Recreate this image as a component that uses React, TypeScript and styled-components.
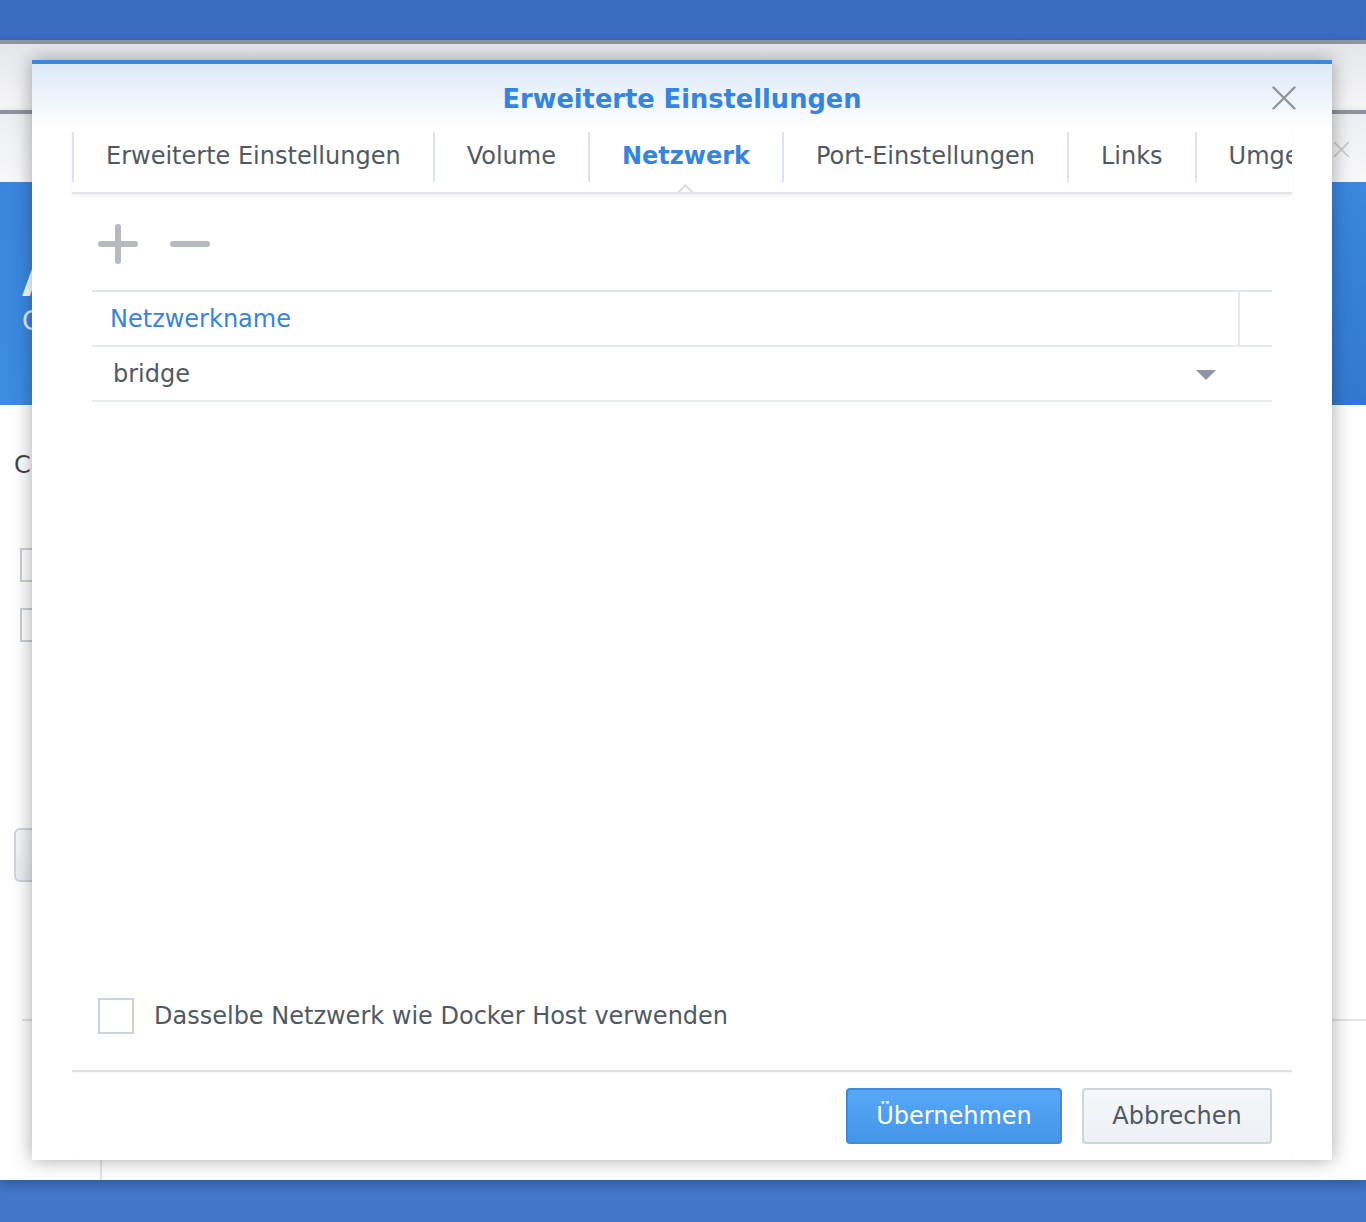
import React from 'react';
import styled, { createGlobalStyle } from 'styled-components';

const GlobalStyle = createGlobalStyle`
  html, body {
    margin: 0;
    padding: 0;
  }
  body {
    font-family: 'DejaVu Sans', Verdana, sans-serif;
    color: #4f5964;
  }
`;

const Desktop = styled.div`
  position: relative;
  width: 1366px;
  height: 1222px;
  overflow: hidden;
  background: #3d70c4;
  background-image: linear-gradient(180deg, #3b6cc0 0%, #4176c9 100%);
`;

const BackWindow = styled.div`
  position: absolute;
  top: 40px;
  left: 0;
  right: 0;
  height: 1140px;
  box-sizing: border-box;
  border-top: 4px solid #8d949d;
  background: #f4f5f6;
  display: flex;
  flex-direction: column;
  box-shadow: 0 4px 10px rgba(0, 0, 0, 0.25);
`;

const BackHeader = styled.div`
  height: 66px;
  flex-shrink: 0;
  background: linear-gradient(180deg, #e4e6e9 0%, #f6f6f7 100%);
`;

const InnerWindow = styled.div`
  height: 1000px;
  flex-shrink: 0;
  box-sizing: border-box;
  border-top: 4px solid #8d949d;
  background: #ffffff;
  display: flex;
  flex-direction: column;
  box-shadow: 0 3px 8px rgba(0, 0, 0, 0.18);
`;

const InnerHeader = styled.div`
  height: 68px;
  background: linear-gradient(180deg, #eceef1 0%, #f8f8f9 100%);
  display: flex;
  justify-content: flex-end;
  align-items: center;
  padding-right: 12px;
`;

const InnerClose = styled.span`
  font-size: 30px;
  color: #c4c8cd;
  font-weight: 200;
`;

const Banner = styled.div`
  height: 223px;
  background: linear-gradient(160deg, #3a86de 0%, #3d8fe6 55%, #3278d2 100%);
  padding: 78px 0 0 22px;
  box-sizing: border-box;
  color: #ffffff;
`;

const BannerTitle = styled.div`
  font-size: 40px;
  font-weight: bold;
  line-height: 44px;
`;

const BannerSub = styled.div`
  font-size: 26px;
  line-height: 34px;
  opacity: 0.85;
`;

const InnerBody = styled.div`
  flex: 1;
  padding: 46px 0 0 14px;
  display: flex;
  flex-direction: column;
`;

const InnerHeading = styled.div`
  font-size: 24px;
  color: #3d4650;
  height: 97px;
`;

const InnerInput = styled.div`
  margin-left: 6px;
  width: 400px;
  height: 30px;
  border: 2px solid #c8d0da;
  margin-bottom: 26px;
`;

const InnerButton = styled.div`
  margin-top: 160px;
  width: 200px;
  height: 50px;
  border: 2px solid #cdd4dc;
  border-radius: 6px;
  background: linear-gradient(180deg, #f6f7f9, #e9ecf0);
`;

const InnerRule = styled.div`
  margin: 137px 0 0 8px;
  height: 2px;
  background: #e2e4e6;
`;

const BackBottom = styled.div`
  flex: 1;
  background: #ffffff;
  padding-left: 100px;
`;

const BackDivider = styled.div`
  height: 100%;
  border-left: 2px solid #e3e4e6;
`;

const Dialog = styled.div`
  position: absolute;
  top: 60px;
  left: 32px;
  width: 1300px;
  height: 1100px;
  box-sizing: border-box;
  border-top: 4px solid #3a87e0;
  background: #ffffff;
  box-shadow: 0 0 18px rgba(0, 0, 0, 0.35);
  display: flex;
  flex-direction: column;
`;

const DialogHeader = styled.div`
  height: 66px;
  flex-shrink: 0;
  background: linear-gradient(180deg, #dce9f8 0%, #ffffff 100%);
  display: grid;
  grid-template-columns: 60px 1fr 60px;
  align-items: center;
`;

const DialogTitle = styled.h1`
  grid-column: 2;
  margin: 0;
  text-align: center;
  font-size: 25.7px;
  font-weight: bold;
  color: #3484e0;
  padding-top: 4px;
`;

const CloseButton = styled.button`
  justify-self: start;
  width: 24px;
  height: 24px;
  margin-top: 2px;
  padding: 0;
  border: none;
  background: none;
  cursor: pointer;
  display: flex;
  align-items: center;
  justify-content: center;
`;

const TabBar = styled.div`
  margin: 0 40px;
  height: 62px;
  flex-shrink: 0;
  display: flex;
  overflow: hidden;
  border-bottom: 2px solid #e3e5e8;
  box-shadow: 0 2px 3px rgba(0, 0, 0, 0.06);
  position: relative;
`;

const Tab = styled.div<{ $active?: boolean }>`
  position: relative;
  flex-shrink: 0;
  height: 48px;
  margin-top: 2px;
  padding: 0 32px 2px;
  border-left: 2px solid #dbe3ec;
  display: flex;
  align-items: center;
  white-space: nowrap;
  font-size: 24px;
  font-weight: ${({ $active }) => ($active ? 'bold' : 'normal')};
  color: ${({ $active }) => ($active ? '#3484e0' : '#4f5964')};
`;

const TabNotch = styled.span`
  position: absolute;
  left: 50%;
  bottom: -20px;
  width: 13px;
  height: 13px;
  margin-left: -8px;
  background: #ffffff;
  border-top: 2px solid #d8dbe0;
  border-left: 2px solid #d8dbe0;
  transform: rotate(45deg);
`;

const Content = styled.div`
  flex: 1;
  padding: 0 60px;
  display: flex;
  flex-direction: column;
`;

const Toolbar = styled.div`
  display: flex;
  gap: 32px;
  padding: 30px 0 0 6px;
  height: 40px;
`;

const ToolButton = styled.button`
  width: 40px;
  height: 40px;
  padding: 0;
  border: none;
  background: none;
  cursor: pointer;
`;

const Grid = styled.div`
  margin-top: 26px;
  border-top: 2px solid #dfe6ee;
`;

const GridRow = styled.div<{ $header?: boolean }>`
  display: flex;
  height: 53px;
  border-bottom: 2px solid #e6ebf0;
  align-items: stretch;
  font-size: 24px;
  color: ${({ $header }) => ($header ? '#3484e0' : '#4f5964')};
`;

const GridCell = styled.div<{ $indent: number }>`
  flex: 1;
  display: flex;
  align-items: center;
  padding-left: ${({ $indent }) => $indent}px;
  padding-right: 56px;
  justify-content: space-between;
`;

const ScrollCell = styled.div`
  width: 32px;
  border-left: 2px solid #e3e8ee;
`;

const Caret = styled.span`
  width: 0;
  height: 0;
  border-left: 10px solid transparent;
  border-right: 10px solid transparent;
  border-top: 10px solid #8e959e;
  margin-top: 2px;
`;

const CheckRow = styled.label`
  margin-top: auto;
  margin-bottom: 36px;
  display: flex;
  align-items: center;
  gap: 20px;
  padding-left: 6px;
  font-size: 24px;
  color: #4f5964;
`;

const CheckBox = styled.span`
  width: 32px;
  height: 32px;
  border: 2px solid #c9d3df;
  background: #ffffff;
`;

const Footer = styled.div`
  margin: 0 40px;
  height: 90px;
  box-sizing: border-box;
  flex-shrink: 0;
  border-top: 2px solid #e0e0e0;
  box-shadow: inset 0 1px 2px rgba(0, 0, 0, 0.04);
  display: flex;
  justify-content: flex-end;
  align-items: flex-start;
  gap: 20px;
  padding: 16px 20px 0 0;
`;

const DialogButton = styled.button<{ $primary?: boolean }>`
  height: 56px;
  padding: 0 28px 0;
  border-radius: 4px;
  font-family: inherit;
  font-size: 24px;
  cursor: pointer;
  color: ${({ $primary }) => ($primary ? '#ffffff' : '#4f5964')};
  border: 2px solid ${({ $primary }) => ($primary ? '#3f8ae0' : '#cdd5df')};
  background: ${({ $primary }) =>
    $primary
      ? 'linear-gradient(180deg, #58a8f7 0%, #4494e9 100%)'
      : 'linear-gradient(180deg, #f5f7fa 0%, #edf0f4 100%)'};
  min-width: ${({ $primary }) => ($primary ? '216px' : '190px')};
`;

const tabs = ['Erweiterte Einstellungen', 'Volume', 'Netzwerk', 'Port-Einstellungen', 'Links', 'Umgebung'];

const CloseIcon = () => (
  <svg width="24" height="24" viewBox="0 0 24 24">
    <path d="M1.5 1.5 L22.5 22.5 M22.5 1.5 L1.5 22.5" stroke="#8e959d" strokeWidth="2.4" strokeLinecap="round" />
  </svg>
);

const PlusIcon = () => (
  <svg width="40" height="40" viewBox="0 0 40 40">
    <path d="M20 3 V37 M3 20 H37" stroke="#b6babf" strokeWidth="6" strokeLinecap="round" />
  </svg>
);

const MinusIcon = () => (
  <svg width="40" height="40" viewBox="0 0 40 40">
    <path d="M3 20 H37" stroke="#b6babf" strokeWidth="6" strokeLinecap="round" />
  </svg>
);

export default function App() {
  const active = 'Netzwerk';

  return (
    <Desktop>
      <GlobalStyle />
      <BackWindow>
        <BackHeader />
        <InnerWindow>
          <InnerHeader>
            <InnerClose>×</InnerClose>
          </InnerHeader>
          <Banner>
            <BannerTitle>Allgemein</BannerTitle>
            <BannerSub>Container</BannerSub>
          </Banner>
          <InnerBody>
            <InnerHeading>Containername</InnerHeading>
            <InnerInput />
            <InnerInput />
            <InnerButton />
            <InnerRule />
          </InnerBody>
        </InnerWindow>
        <BackBottom>
          <BackDivider />
        </BackBottom>
      </BackWindow>

      <Dialog>
        <DialogHeader>
          <DialogTitle>Erweiterte Einstellungen</DialogTitle>
          <CloseButton aria-label="Schließen">
            <CloseIcon />
          </CloseButton>
        </DialogHeader>
        <TabBar>
          {tabs.map((t) => (
            <Tab key={t} $active={t === active}>
              {t}
              {t === active && <TabNotch />}
            </Tab>
          ))}
        </TabBar>
        <Content>
          <Toolbar>
            <ToolButton aria-label="Hinzufügen">
              <PlusIcon />
            </ToolButton>
            <ToolButton aria-label="Entfernen">
              <MinusIcon />
            </ToolButton>
          </Toolbar>
          <Grid>
            <GridRow $header>
              <GridCell $indent={18}>Netzwerkname</GridCell>
              <ScrollCell />
            </GridRow>
            <GridRow>
              <GridCell $indent={21}>
                bridge
                <Caret />
              </GridCell>
            </GridRow>
          </Grid>
          <CheckRow>
            <CheckBox />
            Dasselbe Netzwerk wie Docker Host verwenden
          </CheckRow>
        </Content>
        <Footer>
          <DialogButton $primary>Übernehmen</DialogButton>
          <DialogButton>Abbrechen</DialogButton>
        </Footer>
      </Dialog>
    </Desktop>
  );
}
